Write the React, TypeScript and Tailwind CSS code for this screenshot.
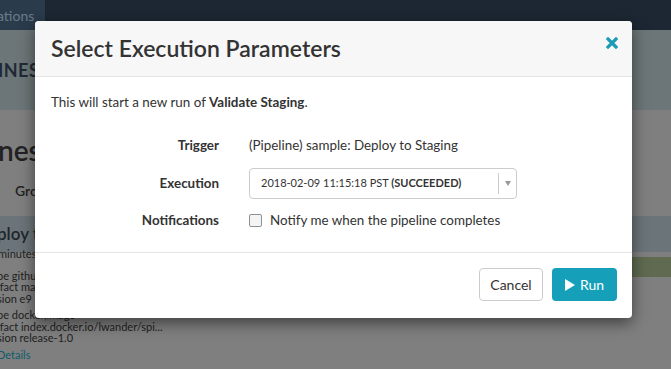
import React from "react";

const font = { fontFamily: '"Lato", "Liberation Sans", sans-serif' };

export default function App() {
  return (
    <div className="relative w-[671px] h-[369px] overflow-hidden bg-[#7f7f7f]" style={font}>
      {/* background page (dimmed) */}
      <div className="flex flex-col">
        <div className="h-[30px] bg-[#1c2733] flex">
          <div className="w-[45px] bg-[#2a3b4c] overflow-hidden flex items-center">
            <span className="text-[14px] text-[#6a7b8a] -ml-[3px] whitespace-nowrap">ations</span>
          </div>
        </div>
        <div className="h-[80px] bg-[#6c7577] flex items-center">
          <span className="text-[18px] font-bold text-[#1f2a36] -ml-[2px] tracking-wide">INES</span>
        </div>
        <div className="h-[106px] flex flex-col">
          <span className="text-[28px] font-semibold text-[#222] -ml-[2px] mt-[22px] leading-[36px]">nes</span>
          <span className="text-[14px] font-semibold text-[#222] ml-[15px] mt-[12px]">Gro</span>
        </div>
        <div className="h-[36px] bg-[#6b7478] flex items-center">
          <span className="text-[17px] font-semibold text-[#1f262b] -ml-[3px]">ploy t</span>
        </div>
        <div className="relative flex flex-col text-[11px] text-[#1e1e1e] leading-[11.5px]">
          <div className="absolute left-[400px] right-0 top-[5px] h-[20px] bg-[#5f6a50]" />
          <span className="-ml-[2px] mt-[-4px]">minutes</span>
          <span className="-ml-[3px] mt-[10px]">pe githu</span>
          <span className="-ml-[3px]">ifact ma</span>
          <span className="-ml-[3px]">sion e9</span>
          <span className="-ml-[3px] mt-[5px]">pe docker,image</span>
          <span className="-ml-[3px]">ifact index.docker.io/lwander/spi...</span>
          <span className="-ml-[3px]">sion release-1.0</span>
          <span className="-ml-[3px] mt-[5px] text-[#0f5b69]">Details</span>
        </div>
      </div>

      {/* modal */}
      <div className="absolute left-[35px] top-[21px] w-[597px] bg-white rounded-[4px] shadow-[0_5px_15px_rgba(0,0,0,0.5)] overflow-hidden">
        <div className="h-[56px] bg-[#f7f7f7] border-b border-[#e5e5e5] flex items-center justify-between pl-[16px] pr-[14px]">
          <h3 className="text-[23px] font-semibold text-[#333] leading-none">Select Execution Parameters</h3>
          <svg width="12" height="12" viewBox="0 0 12 12" className="-mt-[12px]">
            <path d="M2 2 L10 10 M10 2 L2 10" stroke="#1b9bb4" strokeWidth="3.2" strokeLinecap="square" />
          </svg>
        </div>
        <div className="px-[16px] pt-[15px] pb-[22px] text-[#333]">
          <p className="text-[13.4px] leading-[20px]">
            This will start a new run of <b>Validate Staging</b>.
          </p>
          <div className="mt-[23px] grid grid-cols-[168px_1fr] gap-x-[30px] items-center text-[13.4px]">
            <div className="text-right font-bold h-[20px] leading-[20px]">Trigger</div>
            <div className="h-[20px] leading-[20px]">(Pipeline) sample: Deploy to Staging</div>

            <div className="text-right font-bold mt-[13px]">Execution</div>
            <div className="mt-[13px] w-[268px] h-[31px] border border-[#ccc] rounded-[4px] flex items-center">
              <span className="flex-1 pl-[11px] text-[11px] text-[#333]">
                2018-02-09 11:15:18 PST <b>(SUCCEEDED)</b>
              </span>
              <span className="w-px h-[21px] bg-[#ccc]" />
              <span className="w-[17px] flex justify-center">
                <svg width="6" height="5" viewBox="0 0 6 5"><path d="M0 0 H6 L3 5 Z" fill="#999" /></svg>
              </span>
            </div>

            <div className="text-right font-bold mt-[11px] h-[20px] leading-[20px]">Notifications</div>
            <div className="mt-[11px] h-[20px] flex items-center gap-[8px]">
              <span className="w-[13px] h-[13px] rounded-[2px] border border-[#8f8f8f] bg-[#f4f4f4]" />
              <span className="leading-[20px]">Notify me when the pipeline completes</span>
            </div>
          </div>
        </div>
        <div className="border-t border-[#e5e5e5] pt-[15px] pb-[17px] pr-[15px] flex justify-end gap-[9px]">
          <button className="w-[64px] h-[33px] border border-[#ccc] rounded-[4px] text-[14px] text-[#333] bg-white">Cancel</button>
          <button className="w-[65px] h-[33px] rounded-[4px] bg-[#159fb8] text-white text-[14px] flex items-center justify-center gap-[5px]">
            <svg width="10" height="12" viewBox="0 0 10 12"><path d="M0 0 L10 6 L0 12 Z" fill="white" /></svg>
            Run
          </button>
        </div>
      </div>
    </div>
  );
}
